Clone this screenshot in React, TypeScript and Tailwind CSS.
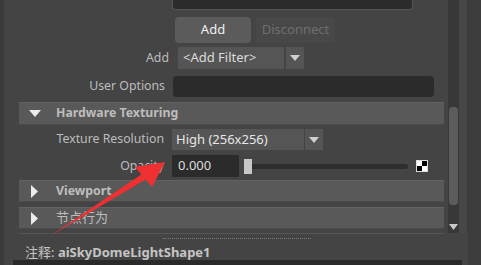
import React from 'react';

const font = { fontFamily: '"Noto Sans", "Noto Sans CJK SC", sans-serif' };

const Label: React.FC<{ text: string; w?: string }> = ({ text, w = 'w-[165px]' }) => (
  <div className={`${w} shrink-0 text-right text-[12.3px] text-[#bdbdbd]`}>{text}</div>
);

const SectionHeader: React.FC<{ title: string; open?: boolean; bold?: boolean }> = ({ title, open, bold = true }) => (
  <div className="ml-[15px] w-[425px] flex items-center bg-[#595959] border-t border-[#626262] border-b border-b-[#4a4a4a]">
    <div className="w-[37px] flex pl-[10px]">
      {open ? (
        <svg width="12" height="7" viewBox="0 0 12 7">
          <path d="M0 0h12L6 7z" fill="#ececec" />
        </svg>
      ) : (
        <svg width="7" height="13" viewBox="0 0 7 13" className="ml-[2px]">
          <path d="M0 0l7 6.5-7 6.5z" fill="#ececec" />
        </svg>
      )}
    </div>
    <div className={`text-[12.3px] text-[#bdbdbd] ${bold ? 'font-bold' : 'text-[13px]'}`}>{title}</div>
  </div>
);

const DropArrow: React.FC = () => (
  <svg width="10" height="6" viewBox="0 0 10 6">
    <path d="M0 0h10L5 6z" fill="#d0d0d0" />
  </svg>
);

export default function App() {
  return (
    <div className="w-[481px] h-[265px] bg-[#444444] relative overflow-hidden flex flex-col" style={font}>
      <div className="flex h-[233px]">
        {/* left border */}
        <div className="w-[4px] bg-[#3a3a3a]" />
        <div className="w-[444px] flex flex-col">
          <div className="ml-[168px] w-[241px] h-[10px] bg-[#2b2b2b] border-b border-x border-[#555] rounded-b-sm" />

          <div className="flex h-[26px] mt-[7px] ml-[171px] gap-[5px]">
            <div className="w-[76px] bg-[#5b5b5b] flex items-center justify-center text-[13px] text-[#f0f0f0] rounded-sm">
              Add
            </div>
            <div className="w-[79px] bg-[#484848] flex items-center justify-center text-[13px] text-[#6f6f6f]">
              Disconnect
            </div>
          </div>

          <div className="flex h-[22px] mt-[4px] items-center">
            <Label text="Add" w="w-[165px]" />
            <div className="ml-[9px] flex h-full gap-[2px]">
              <div className="w-[106px] bg-[#555555] flex items-center pl-[5px] text-[13px] text-[#dcdcdc]">
                &lt;Add Filter&gt;
              </div>
              <div className="w-[18px] bg-[#555555] flex items-center justify-center">
                <DropArrow />
              </div>
            </div>
          </div>

          <div className="flex h-[21px] mt-[7px] items-center">
            <Label text="User Options" w="w-[161px]" />
            <div className="ml-[8px] w-[261px] h-full bg-[#2b2b2b] rounded-sm" />
          </div>

          <div className="mt-[5px] h-[23px] flex">
            <SectionHeader title="Hardware Texturing" open />
          </div>

          <div className="flex h-[21px] mt-[4px] items-center">
            <Label text="Texture Resolution" w="w-[160px]" />
            <div className="ml-[8px] flex h-full gap-[1px]">
              <div className="w-[132px] bg-[#555555] flex items-center pl-[4px] text-[13px] text-[#e6e6e6]">
                High (256x256)
              </div>
              <div className="w-[18px] bg-[#555555] flex items-center justify-center">
                <DropArrow />
              </div>
            </div>
          </div>

          <div className="flex h-[22px] mt-[5px] items-center">
            <Label text="Opacity" w="w-[160px]" />
            <div className="ml-[8px] w-[67px] h-full bg-[#2b2b2b] flex items-center pl-[6px] text-[13px] text-[#dcdcdc]">
              0.000
            </div>
            <div className="ml-[5px] w-[8px] h-[15px] bg-[#c8c8c8]" />
            <div className="w-[156px] h-[5px] bg-[#2e2e2e] rounded-r-sm" />
            <div className="ml-[8px] w-[12px] h-[12px] grid grid-cols-2 border border-[#dcdcdc]">
              <div className="bg-white" />
              <div className="bg-black" />
              <div className="bg-black" />
              <div className="bg-white" />
            </div>
          </div>

          <div className="mt-[3px] h-[22px] flex">
            <SectionHeader title="Viewport" />
          </div>
          <div className="mt-[5px] h-[22px] flex">
            <SectionHeader title="节点行为" bold={false} />
          </div>
        </div>

        {/* scrollbar */}
        <div className="w-[11px] bg-[#383838] flex flex-col items-center">
          <div className="mt-[107px] w-[9px] h-[98px] bg-[#5c5c5c] rounded-sm" />
          <div className="mt-[19px]">
            <svg width="9" height="6" viewBox="0 0 9 6">
              <path d="M0 0h9L4.5 6z" fill="#c8c8c8" />
            </svg>
          </div>
        </div>
        <div className="w-[9px] bg-[#474747] border-r border-[#3a3a3a]" />
        <div className="flex-1 bg-[#3d3d3d]" />
      </div>

      {/* footer */}
      <div className="flex flex-1">
        <div className="w-[468px] flex flex-col border-l-4 border-[#3a3a3a]">
          <div className="ml-[15px] w-[425px] h-[1px] bg-[#555]" />
          <div className="ml-[159px] mt-[4px] w-[148px] h-[1px] border-t border-dotted border-[#777]" />
          <div className="mt-[5px] ml-[21px] text-[13px] text-[#c4c4c4] leading-[16px]">
            注释: <span className="font-bold">aiSkyDomeLightShape1</span>
          </div>
          <div className="mt-auto ml-[9px] w-[449px] h-[5px] bg-[#2a2a2a]" />
        </div>
        <div className="flex-1 bg-[#3d3d3d]" />
      </div>

      {/* red annotation arrow */}
      <svg className="absolute left-0 top-0 pointer-events-none" width="481" height="265" viewBox="0 0 481 265">
        <path d="M50 236 L145 172 L148 178 Z" fill="#f03030" />
        <path d="M165 162 L135 167 L152 187 Z" fill="#f03030" />
      </svg>
    </div>
  );
}
